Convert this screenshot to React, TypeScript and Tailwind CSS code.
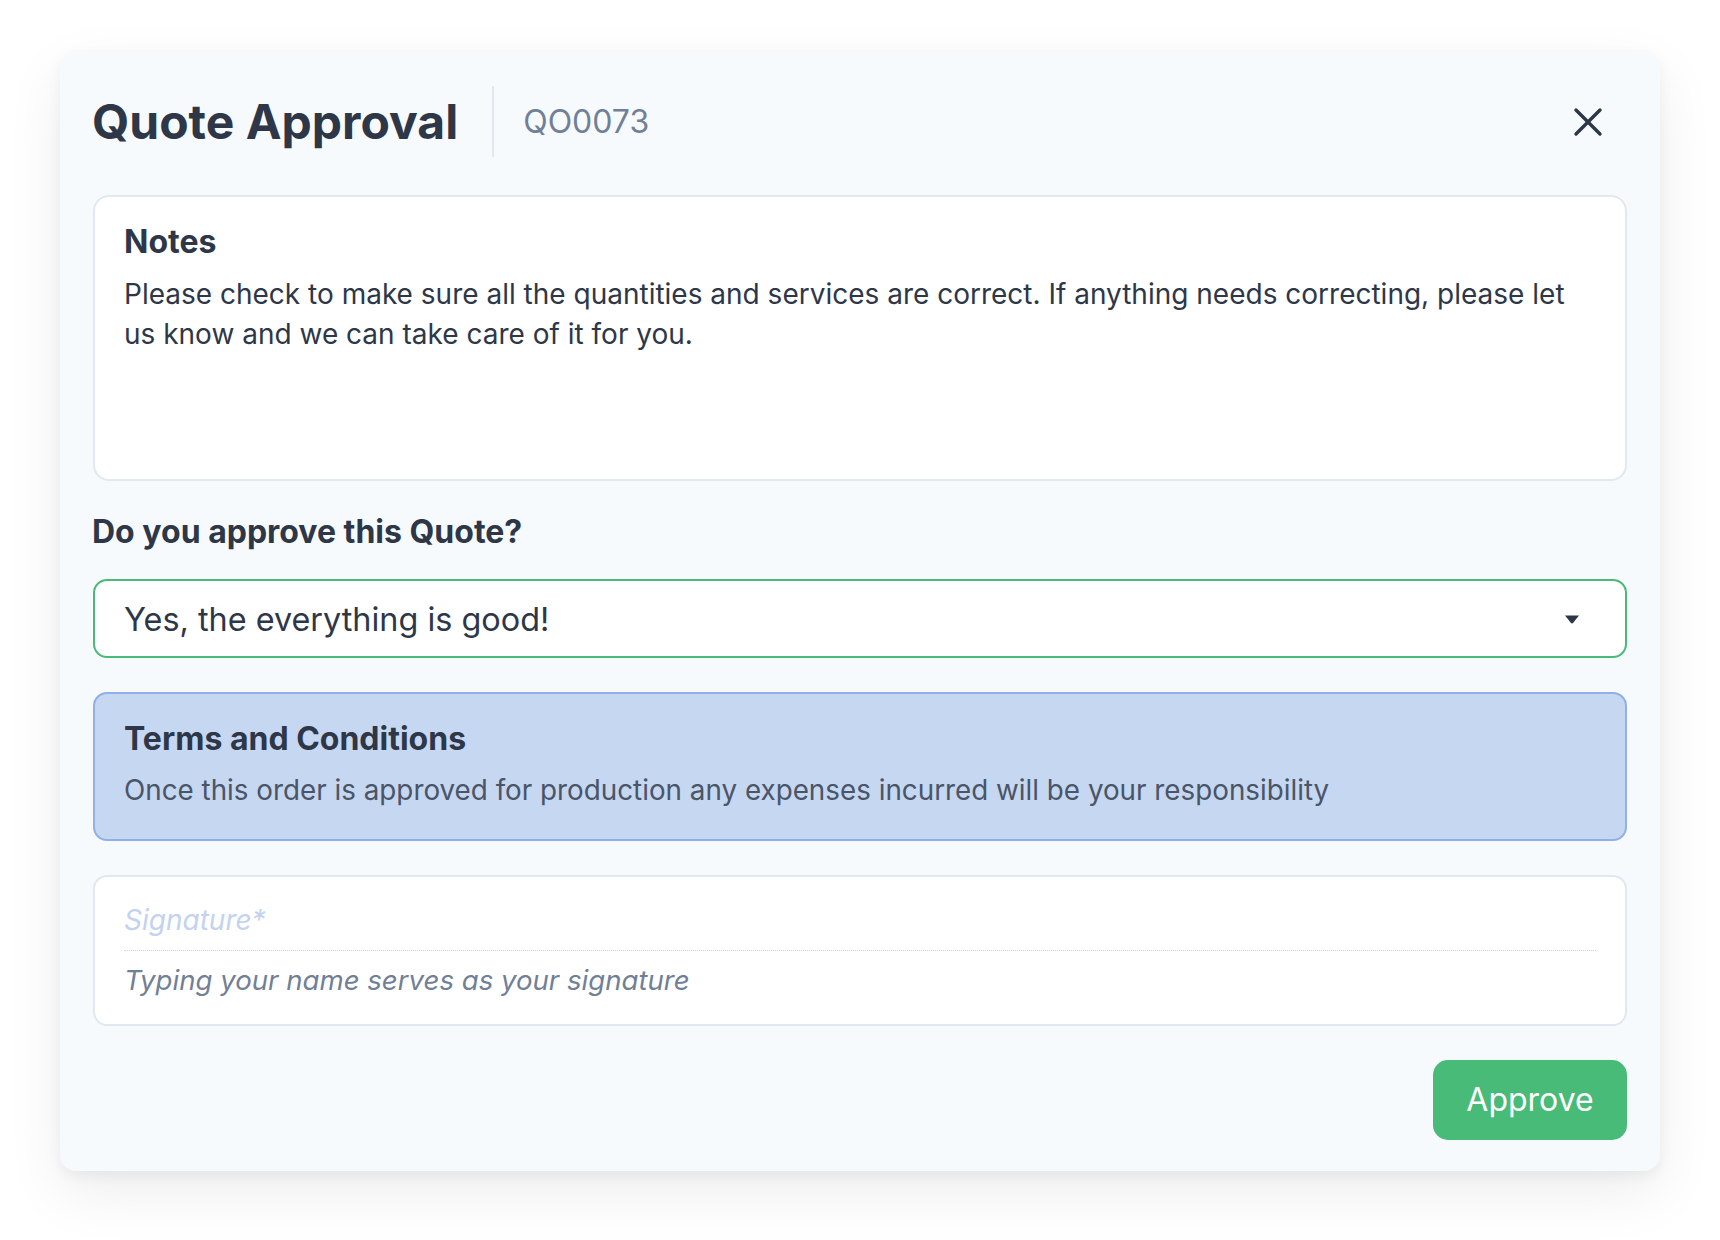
import React from "react";

const CloseIcon = () => (
  <svg width="30" height="30" viewBox="0 0 30 30" fill="none" stroke="#2d3748" strokeWidth="3.4" strokeLinecap="round">
    <path d="M3 3L27 27" />
    <path d="M27 3L3 27" />
  </svg>
);

const Caret = () => (
  <svg width="16" height="10" viewBox="0 0 16 10" fill="#2d3748">
    <path d="M1 1.5h14l-6 7.5c-.5.6-1.5.6-2 0z" />
  </svg>
);

export default function App() {
  return (
    <div className="min-h-screen bg-white pl-[60px] pt-[50px] font-['Inter',sans-serif] text-[#2d3748]">
      <div className="w-[1600px] rounded-[16px] bg-[#f7fafc] px-[33px] pt-[36px] pb-[31px] shadow-[0_6px_14px_rgba(0,0,0,0.05),0_22px_60px_rgba(0,0,0,0.07)]">
        {/* header */}
        <div className="flex items-center">
          <h1 className="-ml-px text-[48px] font-bold leading-none">Quote Approval</h1>
          <div className="ml-[34px] mr-[29px] h-[71px] w-[2px] bg-[#e2e8f0]" />
          <span className="text-[32px] leading-none text-[#718096]">QO0073</span>
          <button className="ml-auto mr-[24px] flex h-[30px] w-[30px] items-center justify-center">
            <CloseIcon />
          </button>
        </div>

        {/* notes */}
        <div className="mt-[38px] h-[286px] rounded-[16px] border-2 border-[#e2e8f0] bg-white px-[29px] pt-[25px]">
          <h2 className="text-[32px] font-bold leading-[40px]">Notes</h2>
          <p className="mt-[12px] text-[28px] leading-[40px]">
            Please check to make sure all the quantities and services are correct. If anything needs correcting, please let
            us know and we can take care of it for you.
          </p>
        </div>

        <h3 className="-ml-px mt-[31px] text-[32px] font-bold leading-[40px]">Do you approve this Quote?</h3>

        {/* select */}
        <div className="mt-[27px] flex h-[79px] items-center rounded-[14px] border-2 border-[#48bb78] bg-white pl-[29px] pr-[45px]">
          <span className="pt-[4px] text-[32.4px] leading-none">Yes, the everything is good!</span>
          <span className="ml-auto flex">
            <Caret />
          </span>
        </div>

        {/* terms */}
        <div className="mt-[34px] h-[149px] rounded-[14px] border-2 border-[#8fb0e8] bg-[#c6d7f1] px-[29px] pt-[25px]">
          <h3 className="text-[32px] font-bold leading-[40px]">Terms and Conditions</h3>
          <p className="mt-[12px] text-[27.8px] leading-[39px] text-[#4a5568]">
            Once this order is approved for production any expenses incurred will be your responsibility
          </p>
        </div>

        {/* signature */}
        <div className="mt-[34px] h-[151px] rounded-[14px] border-2 border-[#e2e8f0] bg-white px-[29px] pt-[23px]">
          <div className="border-b border-dotted border-[#cbd5e0] pb-[10px]">
            <input
              placeholder="Signature*"
              className="h-[40px] w-full bg-transparent text-[28px] italic leading-[40px] outline-none placeholder:text-[#c3d3ef]"
            />
          </div>
          <p className="mt-[10px] text-[27.6px] italic leading-[39px] text-[#718096]">
            Typing your name serves as your signature
          </p>
        </div>

        <div className="mt-[34px] flex justify-end">
          <button className="h-[80px] w-[194px] rounded-[15px] bg-[#48bb78] text-[32px] leading-none text-white">
            Approve
          </button>
        </div>
      </div>
    </div>
  );
}
